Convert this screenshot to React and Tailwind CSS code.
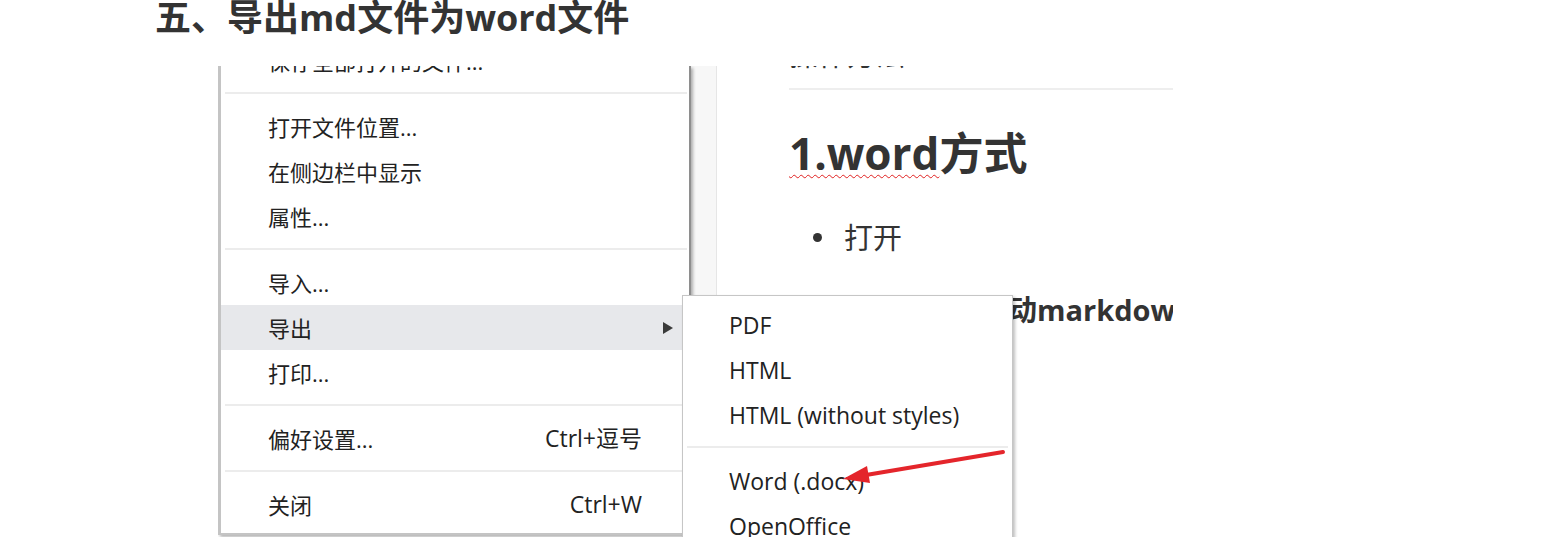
import React from 'react';

const mainMenu = [
  { label: '保存全部打开的文件...' },
  { sep: true },
  { label: '打开文件位置...' },
  { label: '在侧边栏中显示' },
  { label: '属性...' },
  { sep: true },
  { label: '导入...' },
  { label: '导出', active: true, submenu: true },
  { label: '打印...' },
  { sep: true },
  { label: '偏好设置...', shortcut: 'Ctrl+逗号' },
  { sep: true },
  { label: '关闭', shortcut: 'Ctrl+W' },
];

const exportMenu = [
  { label: 'PDF' },
  { label: 'HTML' },
  { label: 'HTML (without styles)' },
  { sep: true },
  { label: 'Word (.docx)' },
  { label: 'OpenOffice' },
  { label: 'RTF' },
];

const MenuSeparator = () => (
  <div className="h-[21px] pl-[4px] pr-[2px] pt-[9px]">
    <div className="h-[2px] bg-[#ececec]" />
  </div>
);

const MenuItem = ({ label, shortcut, active, submenu }) => (
  <div
    className={`flex h-[45px] items-center justify-between pl-[47px] ${submenu ? 'pr-[16px]' : 'pr-[47px]'} ${active ? 'bg-[#e7e8eb]' : ''}`}
  >
    <span className="text-[22px] leading-none">{label}</span>
    {shortcut && <span className="text-[23px] leading-none">{shortcut}</span>}
    {submenu && (
      <svg width="10" height="12" viewBox="0 0 10 12">
        <polygon points="0,0 10,6 0,12" fill="#3a3a3a" />
      </svg>
    )}
  </div>
);

export default function App() {
  return (
    <div className="min-h-[537px] bg-white pl-[155px] font-['Open_Sans','Noto_Sans_CJK_SC',sans-serif] text-[#333]">
      <h1 className="h-[36px] text-[36px] font-bold leading-[36px] text-[#333]">五、导出md文件为word文件</h1>

      {/* screenshot of the editor with the file menu open */}
      <div className="relative ml-[63px] mt-[30px] flex h-[471px] w-[955px] overflow-hidden">
        <div className="relative z-10 h-[469px] w-[473px] shrink-0 overflow-hidden border-b-2 border-l-[3px] border-r-2 border-[#c4c4c4] border-r-[#8e8e8e] bg-white text-[#222] shadow-[2px_2px_3px_rgba(0,0,0,0.3)]">
          <div className="-mt-[28px] pb-[6px]">
            {mainMenu.map((item, i) =>
              item.sep ? <MenuSeparator key={i} /> : <MenuItem key={i} {...item} />
            )}
          </div>
        </div>

        <div className="w-[26px] shrink-0 border-r border-[#e6e6e6] bg-[#f7f7f7]" />

        <div className="min-w-0 flex-1 pl-[72px]">
          <div className="-mt-[26px] h-[29px] whitespace-nowrap text-[29px] leading-[29px]">操作方法</div>
          <div className="mt-[19px] h-[2px] bg-[#eeeeee]" />
          <div className="mt-[38px] h-[50px] whitespace-nowrap text-[44px] font-bold leading-[50px]">
            <span className="underline decoration-[#e02020] decoration-wavy decoration-1 underline-offset-4">1.word</span>
            方式
          </div>
          <div className="mt-[39px] flex h-[40px] items-center">
            <span className="ml-[24px] h-[9px] w-[9px] rounded-full bg-[#333]" />
            <span className="ml-[22px] text-[29px] leading-none">打开</span>
          </div>
          <div className="ml-[16px] mt-[33px] h-[40px] whitespace-nowrap text-[29px] font-bold leading-[40px]">
            先打开软件后启动markdown文件
          </div>
        </div>

        <div className="absolute left-[464px] top-[229px] z-20 h-[300px] w-[331px] border border-[#c6c6c6] bg-white pt-[7px] text-[#222] shadow-[2px_2px_3px_rgba(0,0,0,0.25)]">
          {exportMenu.map((item, i) =>
            item.sep ? (
              <div key={i} className="h-[21px] px-[4px] pt-[8px]">
                <div className="h-[2px] bg-[#ececec]" />
              </div>
            ) : (
              <div key={i} className="flex h-[45px] items-center pl-[46px] text-[23px] leading-none">
                {item.label}
              </div>
            )
          )}
        </div>

        <svg className="pointer-events-none absolute inset-0 z-30" width="955" height="471" viewBox="0 0 955 471">
          <line x1="785" y1="386" x2="648" y2="409" stroke="#e4252b" strokeWidth="4" strokeLinecap="round" />
          <polygon points="625,413 652,417 649,400" fill="#e4252b" />
        </svg>
      </div>
    </div>
  );
}
